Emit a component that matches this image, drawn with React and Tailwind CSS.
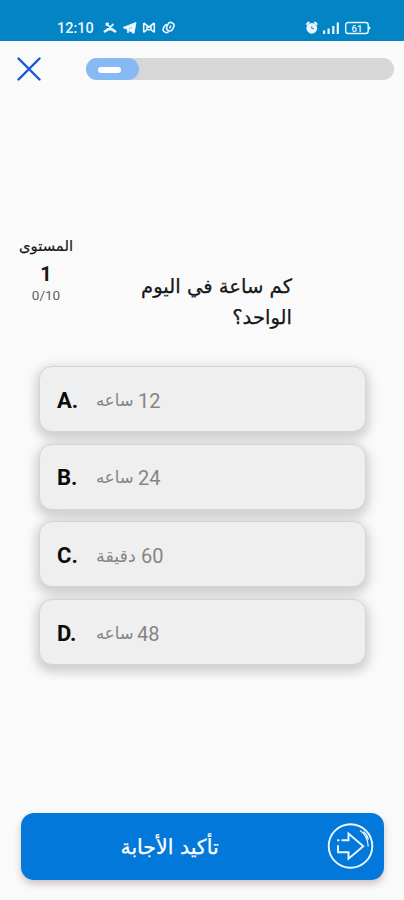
const answers = [
  { letter: 'A.', number: '12', unit: 'ساعه', unitClass: 'w-[37px] text-[16.5px]' },
  { letter: 'B.', number: '24', unit: 'ساعه', unitClass: 'w-[37px] text-[16.5px]' },
  { letter: 'C.', number: '60', unit: 'دقيقة', unitClass: 'w-[40px] text-[17.5px]' },
  { letter: 'D.', number: '48', unit: 'ساعه', unitClass: 'w-[36px] text-[16.5px]' },
];

function StatusBar() {
  return (
    <header className="flex h-[41px] items-start bg-[#0284c5] pr-[33px] pl-[57px] pt-[20px] text-[#e9f6fc]">
      <span className="w-[36px] text-[14.5px] leading-[17px] font-medium whitespace-nowrap">12:10</span>
      <svg className="ml-[10px] mt-[1px]" width="72" height="14" viewBox="0 0 72 14" fill="none" stroke="currentColor">
        <path d="M1 11L5 8.3h4L13 11" strokeWidth="2.6" />
        <path d="M3.2 2.3L7.2 6.3L10.5 3" strokeWidth="1.8" />
        <path d="M3.4 5v-2.5h2.5" strokeWidth="1.3" />
        <path d="M20 6.5L33 1.5L31 12.5L26.5 9.8L24.8 12L24.5 8.5Z" fill="currentColor" strokeWidth=".9" strokeLinejoin="round" />
        <path d="M25.8 8.5L28.8 6" stroke="#0284c5" strokeWidth=".5" />
        <path d="M40.7 2v9.5M51.3 2v9.5M40.7 2l5.3 4.2L51.3 2M41 11.2l3-2.5h4l3 2.5M44 4v5M48 4v5" strokeWidth="1.6" />
        <g strokeWidth="1.6" transform="translate(1 0) rotate(25 65 7)">
          <rect x="62.5" y="1" width="6.3" height="8.5" rx="3" />
          <path d="M62.5 4.5q-2.5.8-2.5 3.5v1q0 3.5 3 3.5 2.7 0 3.3-2.4M65.7 4v3" />
        </g>
      </svg>
      <svg className="ml-auto mt-[1px]" width="66" height="14" viewBox="0 0 66 14" fill="currentColor">
        <circle cx="6.8" cy="7.3" r="5.4" />
        <path d="M1.3 3.8L4.3 1M12.3 3.8L9.3 1" stroke="currentColor" strokeWidth="2" />
        <path d="M6.8 5.2v2.4h2" stroke="#0284c5" fill="none" strokeWidth=".9" />
        <path d="M18 9.5h2.2V13H18zM22.5 7.5h2.2V13h-2.2zM27.2 5h2.2v8h-2.2zM31.7 1.5h2.2V13h-2.2z" />
        <rect x="40.7" y="1.5" width="22.5" height="11" rx="2.5" fill="none" stroke="currentColor" strokeWidth="1.4" />
        <path d="M63.6 4.8l2.2 2.2-2.2 2.2z" />
        <text x="52" y="10.5" textAnchor="middle" fontSize="9.5" fontWeight="500">61</text>
      </svg>
    </header>
  );
}

function Answer({ letter, number, unit, unitClass }) {
  return (
    <button className="flex h-[66px] w-[327px] items-center rounded-[13px] border-[1.5px] border-[#d5d5d5] bg-[#efefef] pl-[17px] text-left shadow-[0_4px_11px_3px_rgba(0,0,0,0.18)]">
      <span className="w-[39px] pt-[3px] text-[22px] leading-[26px] font-bold text-[#0b0b0b]">{letter}</span>
      <span dir="rtl" className="flex items-center gap-[5px] pt-[3px] text-[#858585]">
        <span className="text-[20px] leading-[26px]">{number}</span>
        <span className={`${unitClass} flex justify-end font-['DejaVu_Sans',sans-serif] leading-[26px] whitespace-nowrap`}>{unit}</span>
      </span>
    </button>
  );
}

export default function App() {
  return (
    <div className="flex h-[900px] w-[404px] flex-col overflow-hidden bg-[#fafafa] font-['Roboto',sans-serif]">
      <StatusBar />
      <div className="flex items-center pt-[16px] pl-[17px]">
        <svg width="24" height="24" viewBox="0 0 24 24" fill="none" stroke="#1456d4" strokeWidth="2.4" strokeLinecap="round">
          <path d="M1.5 1.5l21 21M22.5 1.5l-21 21" />
        </svg>
        <div className="ml-[45px] h-[22px] w-[308px] rounded-full bg-[#d7d7d7]">
          <div className="flex h-full w-[53px] items-center rounded-full bg-[#87baf5] pt-[2px] pl-[12px]">
            <div className="h-[6px] w-[23px] rounded-[3px] bg-white" />
          </div>
        </div>
      </div>
      <main className="flex h-[720px] flex-col">
        <div className="flex pt-[153px]">
          <div className="flex w-[92px] flex-col items-center text-[#171717]">
            <span dir="rtl" className="font-['DejaVu_Sans',sans-serif] text-[14.8px] leading-[24px] whitespace-nowrap [-webkit-text-stroke:0.2px_#171717]">المستوى</span>
            <span className="mt-[4px] text-[20px] leading-[24px] font-bold">1</span>
            <span className="text-[13.5px] leading-[18px] text-[#606060]">0/10</span>
          </div>
          <h1 dir="rtl" className="ml-[40px] w-[160px] pt-[37px] font-['DejaVu_Sans',sans-serif] text-[19.6px] leading-[31px] text-[#161616] [-webkit-text-stroke:0.25px_#161616]">
            <span className="block whitespace-nowrap">كم ساعة في اليوم</span>
            <span className="block whitespace-nowrap">الواحد؟</span>
          </h1>
        </div>
        <div className="mt-[33px] ml-[39px] flex flex-col gap-[11.7px]">
          {answers.map((answer) => <Answer key={answer.letter} {...answer} />)}
        </div>
      </main>
      <button className="mt-[12px] ml-[21px] flex h-[67px] w-[363px] shrink-0 items-center rounded-[13px] bg-[#0278db] text-white shadow-[0_4px_7px_rgba(80,30,40,0.25)]">
        <span dir="rtl" className="ml-[99px] flex w-[99px] justify-center font-['DejaVu_Sans',sans-serif] text-[20.5px] leading-[28px] whitespace-nowrap [-webkit-text-stroke:0.25px_white]">تأكيد الأجابة</span>
        <svg className="mb-[2px] ml-[108px]" width="48" height="48" viewBox="0 0 48 48" fill="none" stroke="#eef7ff" strokeWidth="1.9">
          <circle cx="23.5" cy="24" r="21.8" />
          <path d="M14.5 18.3h7v-6.8L36.3 24.3 21.5 36.8v-6.6H11v-7" />
          <path d="M10 18.3h2.5" />
          <path d="M33 8.5q7.7 5 8.2 16M36.5 9.5q3.5 3 5 8" strokeWidth="1.2" />
        </svg>
      </button>
    </div>
  );
}
